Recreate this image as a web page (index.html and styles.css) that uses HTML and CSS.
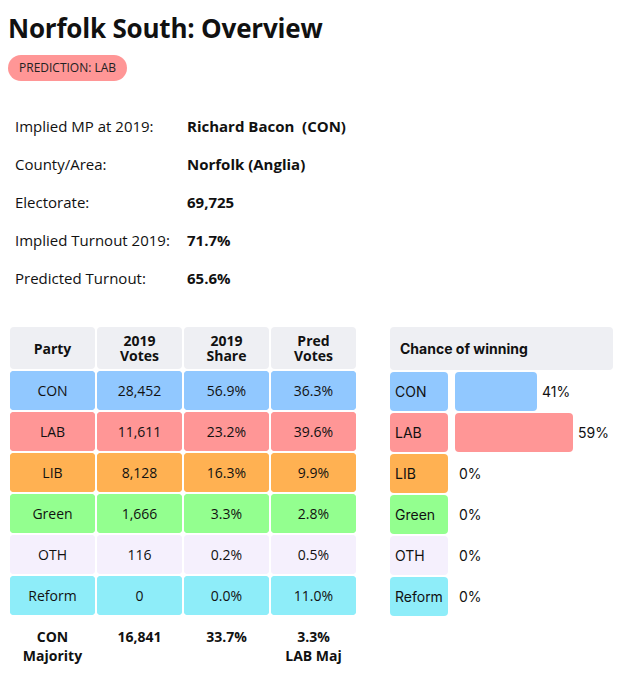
FILE: index.html
```html
<!DOCTYPE html>
<html>
<head>
<meta charset="utf-8">
<link rel="stylesheet" href="styles.css">
</head>
<body>
<h1 class="title">Norfolk South: Overview</h1>
<span class="badge">PREDICTION: LAB</span>

<div class="info">
  <div class="info-label">Implied MP at 2019:</div><div class="info-value">Richard Bacon&nbsp; (CON)</div>
  <div class="info-label">County/Area:</div><div class="info-value">Norfolk (Anglia)</div>
  <div class="info-label">Electorate:</div><div class="info-value">69,725</div>
  <div class="info-label">Implied Turnout 2019:</div><div class="info-value">71.7%</div>
  <div class="info-label">Predicted Turnout:</div><div class="info-value">65.6%</div>
</div>

<div class="tables">
  <table class="results">
    <thead>
      <tr><th>Party</th><th>2019<br>Votes</th><th>2019<br>Share</th><th>Pred<br>Votes</th></tr>
    </thead>
    <tbody>
      <tr class="con"><td>CON</td><td>28,452</td><td>56.9%</td><td>36.3%</td></tr>
      <tr class="lab"><td>LAB</td><td>11,611</td><td>23.2%</td><td>39.6%</td></tr>
      <tr class="lib"><td>LIB</td><td>8,128</td><td>16.3%</td><td>9.9%</td></tr>
      <tr class="grn"><td>Green</td><td>1,666</td><td>3.3%</td><td>2.8%</td></tr>
      <tr class="oth"><td>OTH</td><td>116</td><td>0.2%</td><td>0.5%</td></tr>
      <tr class="ref"><td>Reform</td><td>0</td><td>0.0%</td><td>11.0%</td></tr>
    </tbody>
    <tfoot>
      <tr><td>CON<br>Majority</td><td>16,841</td><td>33.7%</td><td>3.3%<br>LAB Maj</td></tr>
    </tfoot>
  </table>

  <div class="chance">
    <div class="chance-head">Chance of winning</div>
    <div class="chance-row"><div class="cparty con">CON</div><div class="bar con" style="width:82px"></div><span class="pct">41%</span></div>
    <div class="chance-row"><div class="cparty lab">LAB</div><div class="bar lab" style="width:118px"></div><span class="pct">59%</span></div>
    <div class="chance-row"><div class="cparty lib">LIB</div><span class="pct">0%</span></div>
    <div class="chance-row"><div class="cparty grn">Green</div><span class="pct">0%</span></div>
    <div class="chance-row"><div class="cparty oth">OTH</div><span class="pct">0%</span></div>
    <div class="chance-row"><div class="cparty ref">Reform</div><span class="pct">0%</span></div>
  </div>
</div>
</body>
</html>
```
FILE: styles.css
```css
body {
  margin: 8px;
  font-family: "Open Sans", "Liberation Sans", sans-serif;
  color: #111;
  background: #fff;
}
.title {
  font-size: 26px;
  font-weight: 700;
  margin: 0;
  line-height: 40px;
  letter-spacing: -0.2px;
}
.badge {
  display: inline-block;
  margin-top: 7px;
  background: #ff9696;
  border-radius: 13px;
  padding: 0 11px;
  height: 26px;
  line-height: 26px;
  font-size: 12px;
  color: #222;
}
.info {
  display: grid;
  grid-template-columns: 172px auto;
  grid-auto-rows: 38px;
  align-items: center;
  margin: 26px 0 0 7px;
  font-size: 15px;
}
.info-value { font-weight: 700; }

.tables {
  display: flex;
  align-items: flex-start;
  margin-top: 28px;
  gap: 32px;
}
.results {
  border-collapse: separate;
  border-spacing: 2.7px 2.5px;
  font-size: 14px;
  text-align: center;
}
.results th, .results td {
  width: 85px;
  padding: 0;
  border-radius: 4px;
}
.results th {
  background: #eeeff3;
  height: 42px;
  line-height: 15px;
  font-weight: 700;
}
.results tbody td { height: 39px; }
.results tfoot td {
  font-weight: 700;
  line-height: 19px;
  vertical-align: top;
  padding-top: 10px;
}
.con { background: #91c8ff; }
.lab { background: #ff9696; }
.lib { background: #ffb152; }
.grn { background: #93ff8f; }
.oth { background: #f5f0fd; }
.ref { background: #8eedf9; }
.results tr td { background: inherit; }

.chance {
  margin-top: 2px;
  font-family: Inter, "Liberation Sans", sans-serif;
  font-size: 14px;
  display: flex;
  flex-direction: column;
  gap: 2px;
}
.chance-head {
  width: 213px;
  height: 43px;
  background: #eeeff3;
  border-radius: 4px;
  font-weight: 700;
  display: flex;
  align-items: center;
  padding-left: 10px;
}
.chance-row {
  display: flex;
  align-items: center;
  height: 39px;
}
.cparty {
  width: 53px;
  height: 39px;
  border-radius: 4px;
  padding-left: 5px;
  display: flex;
  align-items: center;
  margin-right: 7px;
}
.bar {
  height: 39px;
  border-radius: 4px;
  margin-right: 5px;
}
.pct { margin-left: 4px; }
.bar + .pct { margin-left: 0; }
```
